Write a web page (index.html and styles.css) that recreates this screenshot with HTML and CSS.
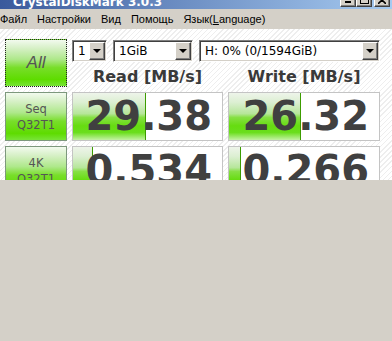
FILE: index.html
```html
<!DOCTYPE html>
<html lang="ru">
  <head>
    <meta charset="UTF-8" />
    <meta name="viewport" content="width=device-width, initial-scale=1.0" />
    <title>CrystalDiskMark 3.0.3</title>
    <link rel="stylesheet" href="styles.css">
  </head>
  <body>
    <div class="window">
      <!-- Title bar -->
      <header class="titlebar">
        <span class="title">CrystalDiskMark 3.0.3</span>
        <div class="title-buttons">
          <span class="tb-btn tb-min"><span class="min-line"></span></span>
          <span class="tb-btn tb-max"><span class="max-box"></span></span>
          <span class="tb-btn tb-close">
            <svg width="8" height="7" viewBox="0 0 8 7"><path d="M0 7 L4 3 L8 7" fill="none" stroke="#000" stroke-width="1.6"/></svg>
          </span>
        </div>
      </header>

      <!-- Menu -->
      <ul class="menubar">
        <li>Файл</li>
        <li>Настройки</li>
        <li>Вид</li>
        <li>Помощь</li>
        <li>Язык(<u>L</u>anguage)</li>
      </ul>

      <!-- Main panel -->
      <main class="panel">
        <div class="bench">
          <button class="test-btn all-btn">All</button>

          <div class="selects">
            <div class="combo combo-count">
              <span class="combo-value">1</span>
              <span class="combo-arrow"></span>
            </div>
            <div class="combo combo-size">
              <span class="combo-value">1GiB</span>
              <span class="combo-arrow"></span>
            </div>
            <div class="combo combo-drive">
              <span class="combo-value">H: 0% (0/1594GiB)</span>
              <span class="combo-arrow"></span>
            </div>
          </div>

          <div class="col-head">Read [MB/s]</div>
          <div class="col-head">Write [MB/s]</div>

          <button class="test-btn">Seq<br>Q32T1</button>
          <div class="result">
            <div class="bar" style="width: 73px"></div>
            <span class="value">29.38</span>
          </div>
          <div class="result">
            <div class="bar" style="width: 72px"></div>
            <span class="value">26.32</span>
          </div>

          <button class="test-btn">4K<br>Q32T1</button>
          <div class="result">
            <div class="bar" style="width: 20px"></div>
            <span class="value">0.534</span>
          </div>
          <div class="result">
            <div class="bar" style="width: 12px"></div>
            <span class="value">0.266</span>
          </div>
        </div>
      </main>
    </div>
  </body>
</html>
```

FILE: styles.css
```css
body {
  margin: 0;
  padding: 0;
  background: #d4d0c8;
  font-family: "Liberation Sans", Arial, sans-serif;
}
.window {
  height: 180px;
  overflow: hidden;
}
/* Title bar */
.titlebar {
  display: flex;
  justify-content: space-between;
  align-items: flex-end;
  height: 9px;
  overflow: hidden;
  background: linear-gradient(to right, #3a5a9c, #a6caf0);
}
.title {
  color: white;
  font: bold 12px/13px "DejaVu Sans", sans-serif;
  padding-left: 13px;
  white-space: nowrap;
}
.title-buttons {
  display: flex;
  margin: 0 2px 2px 0;
}
.tb-btn {
  display: flex;
  justify-content: center;
  align-items: flex-end;
  box-sizing: border-box;
  width: 16px;
  height: 14px;
  padding-bottom: 2px;
  background: #d4d0c8;
  border-top: 1px solid #fff;
  border-left: 1px solid #fff;
  border-right: 1px solid #404040;
  border-bottom: 1px solid #404040;
  box-shadow: inset -1px -1px 0 #808080;
}
.tb-close {
  margin-left: 2px;
}
.min-line {
  width: 6px;
  height: 2px;
  background: #000;
  margin-bottom: 1px;
}
.max-box {
  width: 7px;
  height: 6px;
  border: 1px solid #000;
  border-top: none;
}
/* Menu */
.menubar {
  display: flex;
  gap: 10px;
  list-style: none;
  margin: 0;
  padding: 0;
  height: 20px;
  background: #d4d0c8;
  font-size: 11px;
  line-height: 21px;
  color: #000;
}
/* Panel */
.panel {
  height: 200px;
  padding: 10px 0 0 5px;
  background: repeating-linear-gradient(135deg, #ffffff 0px, #ffffff 2.6px, #eeeeee 2.6px, #eeeeee 3.6px);
}
.bench {
  display: grid;
  grid-template-columns: 62px 151px 152px;
  grid-template-rows: 23px 20px 49px 49px;
  column-gap: 5px;
  row-gap: 5px;
}
.test-btn {
  box-sizing: border-box;
  margin: 0;
  padding: 0;
  border: 1px solid #7d987d;
  background: linear-gradient(to bottom, #f2faee 0%, #d6f0c6 18%, #aee88a 42%, #78de2a 60%, #5edc00 86%, #78e438 100%);
  color: #555;
  font: 11.5px/16px "DejaVu Sans", sans-serif;
}
.all-btn {
  grid-row: 1 / 3;
  border: 1px dotted #222;
  font: italic 17px "Liberation Sans", Arial, sans-serif;
}
/* Combos */
.selects {
  grid-column: 2 / 4;
  display: flex;
  gap: 6px;
  align-self: end;
}
.combo {
  display: flex;
  justify-content: space-between;
  box-sizing: border-box;
  height: 22px;
  background: white;
  border-top: 1px solid #808080;
  border-left: 1px solid #808080;
  border-right: 1px solid #fff;
  border-bottom: 1px solid #fff;
  box-shadow: inset 1px 1px 0 #404040, inset -1px -1px 0 #d4d0c8;
  padding: 1px;
}
.combo-count {
  width: 35px;
}
.combo-size {
  width: 80px;
}
.combo-drive {
  width: 181px;
}
.combo-value {
  padding-left: 4px;
  font: 12px/18px "DejaVu Sans", sans-serif;
  color: #000;
  white-space: nowrap;
}
.combo-arrow {
  position: relative;
  box-sizing: border-box;
  width: 16px;
  height: 18px;
  background: #d4d0c8;
  border-top: 1px solid #fff;
  border-left: 1px solid #fff;
  border-right: 1px solid #404040;
  border-bottom: 1px solid #404040;
  box-shadow: inset -1px -1px 0 #808080;
}
.combo-arrow::after {
  content: "";
  position: absolute;
  left: 3px;
  top: 6px;
  border-left: 4px solid transparent;
  border-right: 4px solid transparent;
  border-top: 4px solid #000;
}
/* Results */
.col-head {
  text-align: center;
  font: bold 16px/20px "DejaVu Sans", sans-serif;
  color: #3a3a3a;
}
.result {
  position: relative;
  border: 1px solid #c4c4c4;
  background: white;
  overflow: hidden;
}
.bar {
  position: absolute;
  left: 0;
  top: 0;
  bottom: 0;
  box-sizing: border-box;
  border-right: 1px solid #3c9c00;
  background: linear-gradient(to bottom, #eef4ea 0%, #dcefd2 20%, #b6e69a 44%, #86e044 52%, #66dc10 70%, #6ade1c 84%, #c4f2a4 100%);
}
.value {
  position: relative;
  display: block;
  text-align: right;
  padding-right: 10px;
  font: bold 40px/47px "DejaVu Sans", sans-serif;
  color: #404040;
}
```
